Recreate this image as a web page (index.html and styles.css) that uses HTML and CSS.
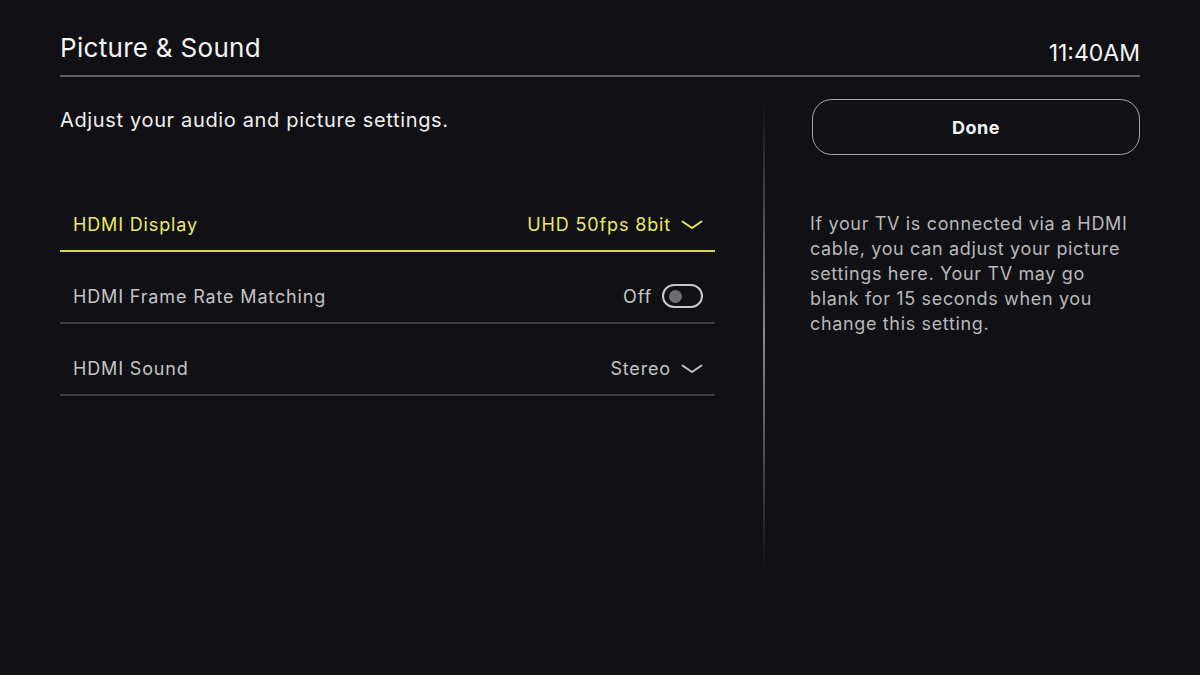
FILE: index.html
```html
<!DOCTYPE html>
<html>
<head>
<meta charset="utf-8">
<link rel="stylesheet" href="styles.css">
</head>
<body>
<div class="screen">
  <header class="header">
    <h1 class="title">Picture &amp; Sound</h1>
    <div class="time">11:40AM</div>
  </header>
  <div class="main">
    <section class="left">
      <p class="subtitle">Adjust your audio and picture settings.</p>
      <div class="list">
        <div class="row active">
          <span class="label">HDMI Display</span>
          <span class="value">UHD 50fps 8bit
            <svg class="chev" width="22" height="10" viewBox="0 0 22 10"><path d="M1.5 1.5 L11 8 L20.5 1.5" fill="none" stroke="currentColor" stroke-width="2" stroke-linecap="round" stroke-linejoin="round"/></svg>
          </span>
        </div>
        <div class="row">
          <span class="label">HDMI Frame Rate Matching</span>
          <span class="value">Off <span class="toggle"><span class="knob"></span></span></span>
        </div>
        <div class="row">
          <span class="label">HDMI Sound</span>
          <span class="value">Stereo
            <svg class="chev" width="22" height="10" viewBox="0 0 22 10"><path d="M1.5 1.5 L11 8 L20.5 1.5" fill="none" stroke="currentColor" stroke-width="2" stroke-linecap="round" stroke-linejoin="round"/></svg>
          </span>
        </div>
      </div>
    </section>
    <div class="divider"></div>
    <aside class="right">
      <button class="done">Done</button>
      <p class="help">If your TV is connected via a HDMI cable, you can adjust your picture settings here. Your TV may go blank for 15 seconds when you change this setting.</p>
    </aside>
  </div>
</div>
</body>
</html>
```

FILE: styles.css
```css
* { box-sizing: border-box; }
html, body { margin: 0; padding: 0; }
body {
  width: 1200px;
  height: 675px;
  background: #111115;
  font-family: Inter, "Noto Sans", sans-serif;
  color: #f2f2f2;
  overflow: hidden;
}
.screen { padding: 0 60px; }
.header {
  display: flex;
  justify-content: space-between;
  align-items: flex-end;
  height: 77px;
  border-bottom: 2px solid #5e5e63;
  padding-bottom: 10px;
}
.title {
  margin: 0;
  font-size: 26px;
  font-weight: 400;
  letter-spacing: 0.3px;
  color: #f4f4f4;
  line-height: 1;
  position: relative;
  top: -4px;
}
.time {
  font-size: 23px;
  line-height: 1;
  color: #f4f4f4;
  letter-spacing: 0px;
}
.main {
  display: flex;
}
.left {
  width: 656px;
}
.subtitle {
  margin: 30px 0 0 0;
  font-size: 20px;
  line-height: 26px;
  color: #f0f0f0;
  letter-spacing: 0.65px;
}
.list {
  margin-top: 47px;
}
.row {
  display: flex;
  justify-content: space-between;
  align-items: center;
  height: 72px;
  padding: 18px 12px 0 13px;
  border-bottom: 2px solid #3a3a3f;
  font-size: 18px;
  color: #c4c4c6;
  letter-spacing: 0.85px;
}
.row.active {
  color: #ece86a;
  border-bottom-color: #d9d35a;
}
.value {
  display: flex;
  align-items: center;
  gap: 10px;
}
.chev { display: block; margin-top: 1px; }
.toggle {
  display: block;
  width: 41px;
  height: 24px;
  border: 2px solid #c8c8ca;
  border-radius: 12px;
  position: relative;
}
.knob {
  position: absolute;
  left: 5px;
  top: 3.5px;
  width: 13px;
  height: 13px;
  border-radius: 50%;
  background: #6e6e71;
}
.divider {
  width: 2px;
  height: 470px;
  margin: 24px 0 0 48px;
  background: linear-gradient(to bottom, rgba(140,140,145,0) 0%, #8a8a8e 50%, rgba(140,140,145,0) 100%);
}
.right {
  margin-left: 45px;
  width: 330px;
  padding-top: 22px;
}
.done {
  display: block;
  width: 328px;
  height: 56px;
  margin-left: 2px;
  background: #121216;
  border: 1px solid #a6a6aa;
  border-radius: 20px;
  color: #f4f4f4;
  font-family: Inter, "Noto Sans", sans-serif;
  font-size: 18px;
  font-weight: 700;
  letter-spacing: 0.5px;
}
.help {
  width: 322px;
  margin: 56px 0 0 0;
  font-size: 18px;
  line-height: 25px;
  color: #b8b8bb;
  letter-spacing: 0.65px;
}
```
